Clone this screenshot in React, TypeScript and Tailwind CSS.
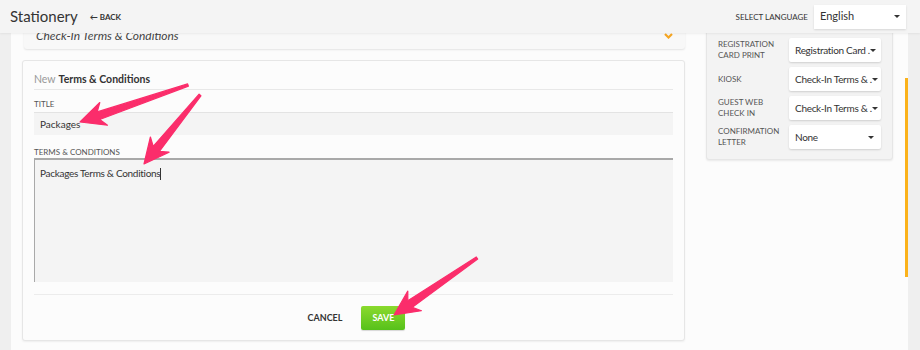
import React from "react";

type Pt = [number, number];

// skitch style annotation arrow, tapered shaft + wide head
const arrowPoints = (tail: Pt, tip: Pt) => {
  const dx = tip[0] - tail[0];
  const dy = tip[1] - tail[1];
  const len = Math.sqrt(dx * dx + dy * dy);
  const d: Pt = [dx / len, dy / len];
  const n: Pt = [-d[1], d[0]];
  const L = 25, W = 12, w0 = 1.2, w1 = 4;
  const at = (p: Pt, k: number, h: number): Pt => [p[0] + d[0] * k + n[0] * h, p[1] + d[1] * k + n[1] * h];
  const pts: Pt[] = [
    at(tail, 0, w0),
    at(tip, -L * 0.78, w1),
    at(tip, -L, W),
    tip,
    at(tip, -L, -W),
    at(tip, -L * 0.78, -w1),
    at(tail, 0, -w0),
  ];
  return pts.map((p) => p[0].toFixed(1) + "," + p[1].toFixed(1)).join(" ");
};

const Caret = () => (
  <span className="shrink-0 w-0 h-0 border-x-[3px] border-x-transparent border-t-[3px] border-t-[#333]" />
);

const Select = ({ value }: { value: string }) => (
  <div className="w-[92px] h-[24px] shrink-0 bg-white rounded-[2px] shadow-[0_1px_2px_rgba(0,0,0,0.15)] flex items-center justify-between pl-[6px] pr-[7px]">
    <span className="text-[10px] tracking-[-0.3px] text-[#333] whitespace-nowrap">{value}</span>
    <Caret />
  </div>
);

const rows = [
  { label: ["REGISTRATION", "CARD PRINT"], value: "Registration Card ." },
  { label: ["KIOSK"], value: "Check-In Terms & ." },
  { label: ["GUEST WEB", "CHECK IN"], value: "Check-In Terms & ." },
  { label: ["CONFIRMATION", "LETTER"], value: "None" },
];

const App = () => {
  return (
    <div className="w-[920px] h-[350px] overflow-hidden bg-[#efefef] relative flex flex-col" style={{ fontFamily: "Lato, 'Liberation Sans', sans-serif" }}>
      {/* ---- header ---- */}
      <div className="h-[33px] shrink-0 flex items-center justify-between pl-[10px] pr-[14px] bg-[#f4f4f4] shadow-[0_1px_2px_rgba(0,0,0,0.06)] relative z-10">
        <div className="flex items-center gap-[12px]">
          <h1 className="text-[15px] text-[#333] leading-none">Stationery</h1>
          <span className="text-[8px] font-bold text-[#333]">← BACK</span>
        </div>
        <div className="flex items-center gap-[6px]">
          <span className="text-[8px] text-[#333]">SELECT LANGUAGE</span>
          <div className="w-[92px] h-[24px] bg-white shadow-[0_1px_2px_rgba(0,0,0,0.12)] flex items-center justify-between pl-[6px] pr-[6px]">
            <span className="text-[11px] text-[#333]">English</span>
            <Caret />
          </div>
        </div>
      </div>

      {/* ---- body ---- */}
      <div className="flex flex-1 min-h-0">
        <div className="w-[11px] shrink-0" />
        <div className="w-[894px] bg-[#fcfcfc] overflow-hidden flex gap-[21px]">
          {/* left column */}
          <div className="ml-[11px] w-[663px] flex flex-col">
            <div className="-mt-[14px] h-[30px] ml-[2px] bg-[#f8f8f8] rounded-[3px] shadow-[0_1px_2px_rgba(0,0,0,0.1)] flex items-center justify-between px-[12px] pt-[4px]">
              <span className="italic text-[12px] text-[#444]">Check-In Terms &amp; Conditions</span>
              <svg width="9" height="6" viewBox="0 0 9 6">
                <polyline points="1,1 4.5,4.5 8,1" fill="none" stroke="#f5a623" strokeWidth="2.2" />
              </svg>
            </div>

            <div className="mt-[11px] h-[281px] bg-[#fcfcfc] border border-[#e6e6e6] rounded-[3px] shadow-[0_1px_2px_rgba(0,0,0,0.06)] px-[11px] flex flex-col">
              <div className="h-[29px] flex items-end pb-[1px] border-b border-[#e8e8e8]">
                <span className="text-[10.5px] text-[#999]">New</span>
                <span className="text-[10.5px] font-bold text-[#333] ml-[3px]">Terms &amp; Conditions</span>
              </div>
              <label className="mt-[10px] text-[8px] text-[#555] leading-none">TITLE</label>
              <div className="mt-[4px] h-[23px] bg-[#f4f4f4] border-t border-[#e3e3e3] flex items-center px-[6px]">
                <span className="text-[10px] text-[#333]">Packages</span>
              </div>
              <label className="mt-[13px] text-[8px] text-[#555] leading-none">TERMS &amp; CONDITIONS</label>
              <div className="mt-[2px] h-[124px] bg-[#f4f4f4] border-t-2 border-l border-[#a9a9a9] px-[5px] pt-[6px] text-[10px] leading-[14px] tracking-[-0.3px] text-[#333]">
                <span>Packages Terms &amp; Conditions</span>
                <span className="inline-block w-px h-[12px] bg-[#333] align-middle" />
              </div>
              <div className="mt-[12px] border-t border-[#ececec]" />
              <div className="flex items-center justify-center gap-[19px] mt-[11px] pl-[6px]">
                <span className="text-[9px] font-bold text-[#333]">CANCEL</span>
                <div className="w-[44px] h-[24px] rounded-[2px] bg-gradient-to-b from-[#8ada2e] to-[#56c11a] flex items-center justify-center shadow-[0_1px_1px_rgba(0,0,0,0.15)]">
                  <span className="text-[9px] font-bold text-white">SAVE</span>
                </div>
              </div>
            </div>
          </div>

          {/* right panel */}
          <div className="w-[187px] self-start -mt-[10px] bg-[#f3f3f3] border border-[#e6e6e6] rounded-[3px] shadow-[0_1px_2px_rgba(0,0,0,0.08)] pt-[14px] pb-[10px] px-[11px] flex flex-col gap-[5px]">
            {rows.map((r) => (
              <div key={r.value + r.label[0]} className="flex items-center justify-between h-[24px]">
                <div className="flex flex-col text-[8px] text-[#555] leading-[11px]">
                  {r.label.map((l) => (
                    <span key={l}>{l}</span>
                  ))}
                </div>
                <Select value={r.value} />
              </div>
            ))}
          </div>
        </div>
        {/* scrollbar */}
        <div className="w-[3px] shrink-0 bg-[#fcfcfc]">
          <div className="mt-[45px] h-[199px] bg-[#fbb21b]" />
        </div>
      </div>

      {/* ---- annotation arrows ---- */}
      <svg className="absolute inset-0 pointer-events-none" width="920" height="350">
        {[
          [[188, 85], [80, 122]],
          [[200, 95], [144, 164]],
          [[477, 258], [394, 315]],
        ].map((a, i) => (
          <polygon key={i} points={arrowPoints(a[0] as Pt, a[1] as Pt)} fill="#fb2d6b" stroke="#fb2d6b" strokeWidth="1.2" strokeLinejoin="round" />
        ))}
      </svg>
    </div>
  );
};

export default App;
